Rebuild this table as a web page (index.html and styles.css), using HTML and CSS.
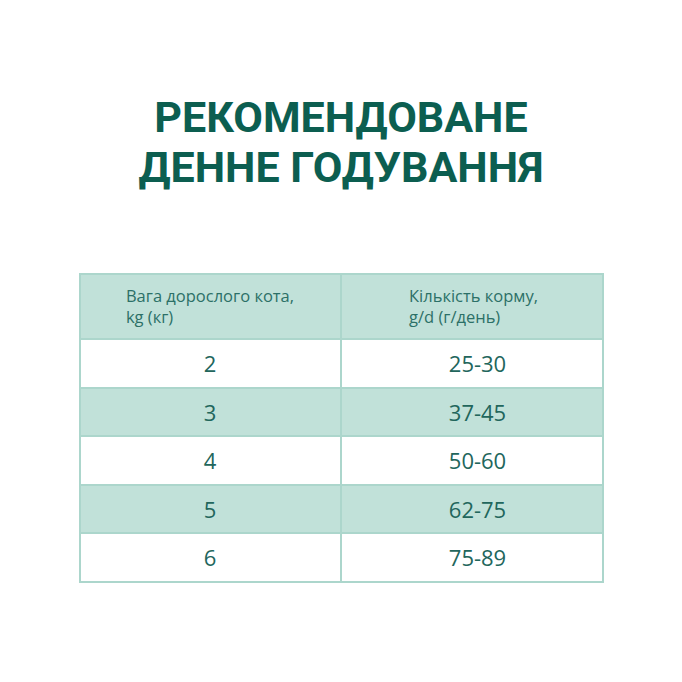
FILE: index.html
```html
<!DOCTYPE html>
<html lang="uk">
<head>
<meta charset="utf-8">
<link rel="stylesheet" href="styles.css">
</head>
<body>
<div class="page">
  <h1 class="title">РЕКОМЕНДОВАНЕ<br>ДЕННЕ ГОДУВАННЯ</h1>
  <div class="table">
    <div class="row head">
      <div class="cell"><span class="hd">Вага дорослого кота,<br>kg (кг)</span></div>
      <div class="cell"><span class="hd">Кількість корму,<br>g/d (г/день)</span></div>
    </div>
    <div class="row"><div class="cell">2</div><div class="cell">25-30</div></div>
    <div class="row alt"><div class="cell">3</div><div class="cell">37-45</div></div>
    <div class="row"><div class="cell">4</div><div class="cell">50-60</div></div>
    <div class="row alt"><div class="cell">5</div><div class="cell">62-75</div></div>
    <div class="row last"><div class="cell">6</div><div class="cell">75-89</div></div>
  </div>
</div>
</body>
</html>
```
FILE: styles.css
```css
html, body { margin: 0; padding: 0; background: #fff; }
.page {
  width: 682px;
  height: 682px;
  display: flex;
  flex-direction: column;
  align-items: center;
  font-family: "Open Sans", "Noto Sans", sans-serif;
}
.title {
  margin: 92px 0 0 0;
  font-family: Roboto, "Noto Sans", sans-serif;
  font-weight: 700;
  font-size: 43px;
  line-height: 50px;
  letter-spacing: 0;
  color: #0c5e50;
  text-align: center;
}
.table {
  margin-top: 81px;
  width: 521px;
  border: 2px solid #acd6cc;
  display: flex;
  flex-direction: column;
}
.row {
  display: grid;
  grid-template-columns: 261px 1fr;
  height: 48.5px;
  border-bottom: 2px solid #acd6cc;
  box-sizing: border-box;
}
.row.last { border-bottom: none; height: 46.5px; }
.row.head { height: 65px; background: #c1e1d9; }
.row.alt { background: #c1e1d9; }
.cell {
  display: flex;
  align-items: center;
  justify-content: center;
  font-size: 22px;
  color: #22665c;
}
.cell:first-child { border-right: 2px solid #acd6cc; }
.cell + .cell { padding-left: 12px; }
.head .cell + .cell { padding-left: 4px; }
.hd {
  display: inline-block;
  text-align: left;
  font-size: 16.5px;
  line-height: 20.5px;
  color: #2c7067;
}
```
